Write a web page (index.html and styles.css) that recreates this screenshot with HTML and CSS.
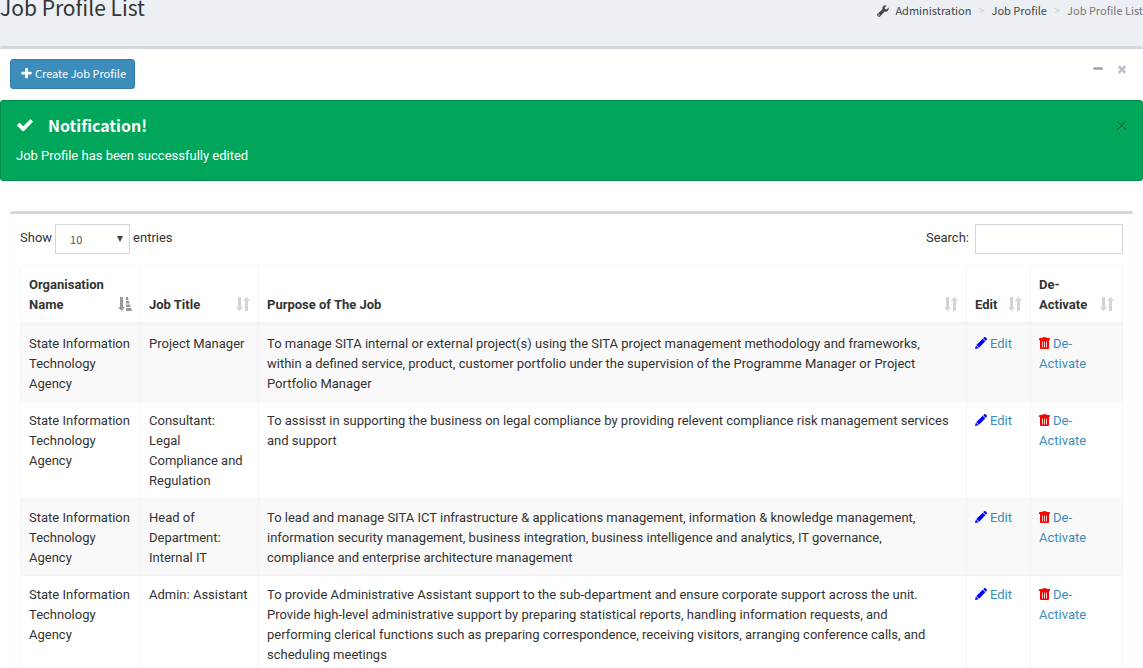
FILE: index.html
```html
<!DOCTYPE html>
<html lang="en">
<head>
<meta charset="utf-8">
<title>Job Profile List</title>
<link rel="stylesheet" href="styles.css">
</head>
<body>
<svg class="sprite" aria-hidden="true">
  <symbol id="plus" viewBox="0 0 1792 1792"><path d="M1600 736v192q0 40-28 68t-68 28h-416v416q0 40-28 68t-68 28h-192q-40 0-68-28t-28-68v-416h-416q-40 0-68-28t-28-68v-192q0-40 28-68t68-28h416v-416q0-40 28-68t68-28h192q40 0 68 28t28 68v416h416q40 0 68 28t28 68z"/></symbol>
  <symbol id="check" viewBox="0 0 1792 1792"><path d="M1671 566q0 40-28 68l-724 724-136 136q-28 28-68 28t-68-28l-136-136-362-362q-28-28-28-68t28-68l136-136q28-28 68-28t68 28l294 295 656-657q28-28 68-28t68 28l136 136q28 28 28 68z"/></symbol>
  <symbol id="minus" viewBox="0 0 1792 1792"><path d="M1600 736v192q0 40-28 68t-68 28h-1216q-40 0-68-28t-28-68v-192q0-40 28-68t68-28h1216q40 0 68 28t28 68z"/></symbol>
  <symbol id="times" viewBox="0 0 1792 1792"><path d="M1490 1322q0 40-28 68l-136 136q-28 28-68 28t-68-28l-294-294-294 294q-28 28-68 28t-68-28l-136-136q-28-28-28-68t28-68l294-294-294-294q-28-28-28-68t28-68l136-136q28-28 68-28t68 28l294 294 294-294q28-28 68-28t68 28l136 136q28 28 28 68t-28 68l-294 294 294 294q28 28 28 68z"/></symbol>
  <symbol id="wrench" viewBox="0 0 12 12"><path d="M11.6 2.4 9.6 4.400 8 4 7.600 2.400 9.600.4C8.300 0 6.900.3 6.100 1.300 5.400 2.200 5.200 3.300 5.500 4.300L.7 8.700a1.500 1.500 0 0 0 0 2.300l.3.3a1.500 1.500 0 0 0 2.300 0L7.700 6.500c1 .3 2.100.1 3-.6 1-.9 1.300-2.200.9-3.500zM2 10.700a.7.7 0 1 1 0-1.400.7.7 0 0 1 0 1.400z" fill-rule="evenodd"/></symbol>
  <symbol id="pencil" viewBox="0 0 12 12"><path d="M8.200 1.200 9.200.3a1 1 0 0 1 1.400 0l1.100 1.100a1 1 0 0 1 0 1.400l-1 1zM7.700 1.700l2.600 2.600-6.200 6.400-2.800-2.800zM.9 8.500l2.700 2.700L0 12z"/></symbol>
  <symbol id="trash" viewBox="0 0 11 12"><path d="M3.500 1V.5a.5.5 0 0 1 .5-.5h3a.5.5 0 0 1 .5.500V1H10q1 0 1 1v1H0V2q0-1 1-1zM4.300 1h2.400V.7H4.300zM1 3h9v8q0 1-1 1H2q-1 0-1-1zM3 4.500v6h.8v-6zM5.100 4.500v6h.8v-6zM7.200 4.500v6H8v-6z" fill-rule="evenodd"/></symbol>
  <symbol id="sort" viewBox="0 0 14 14"><path d="M2 0h3v10h2L3.500 14 0 10h2zM9 14h3V4h2L10.500 0 7 4h2z"/></symbol>
  <symbol id="sorted" viewBox="0 0 14 14"><path d="M2 0h3v10h2L3.500 14 0 10h2zM8 0h2l.5 3H8zM8 4h3l.5 2.500H8zM8 7.500h4l.6 2.500H8zM8 11h5.300l.7 3H8z"/></symbol>
</svg>

<header class="page-header">
  <h1 class="page-title">Job Profile List</h1>
  <nav class="breadcrumb" aria-label="Breadcrumb">
    <a class="crumb" href="#"><svg class="icon-wrench"><use href="#wrench"/></svg>Administration</a>
    <span class="crumb-sep">&gt;</span>
    <a class="crumb" href="#">Job Profile</a>
    <span class="crumb-sep">&gt;</span>
    <span class="crumb-current">Job Profile List</span>
  </nav>
</header>

<main class="box">
  <div class="box-header">
    <button class="create-button" type="button"><svg class="icon-plus"><use href="#plus"/></svg>Create Job Profile</button>
    <div class="box-tools">
      <button class="tool-button" type="button" aria-label="Collapse"><svg class="icon-tool icon-minus"><use href="#minus"/></svg></button>
      <button class="tool-button" type="button" aria-label="Remove"><svg class="icon-tool"><use href="#times"/></svg></button>
    </div>
  </div>

  <section class="alert" role="alert">
    <div class="alert-heading">
      <svg class="icon-check"><use href="#check"/></svg>
      <h2 class="alert-title">Notification!</h2>
      <button class="alert-close" type="button" aria-label="Close">×</button>
    </div>
    <p class="alert-text">Job Profile has been successfully edited</p>
  </section>

  <section class="panel">
    <div class="controls">
      <label class="control">Show
        <select class="length-select"><option>10</option><option>25</option><option>50</option></select>
        entries</label>
      <label class="control control-search">Search: <input class="search-input" type="search"></label>
    </div>
    <table class="jobs">
      <colgroup><col class="col-org"><col class="col-title"><col><col class="col-edit"><col class="col-remove"></colgroup>
      <thead>
        <tr>
          <th><div class="heading"><span>Organisation Name</span><svg class="icon-sort icon-sorted"><use href="#sorted"/></svg></div></th>
          <th><div class="heading"><span>Job Title</span><svg class="icon-sort"><use href="#sort"/></svg></div></th>
          <th><div class="heading"><span>Purpose of The Job</span><svg class="icon-sort"><use href="#sort"/></svg></div></th>
          <th><div class="heading"><span>Edit</span><svg class="icon-sort"><use href="#sort"/></svg></div></th>
          <th><div class="heading"><span>De-<wbr>Activate</span><svg class="icon-sort"><use href="#sort"/></svg></div></th>
        </tr>
      </thead>
      <tbody>
        <tr>
          <td>State Information Technology Agency</td>
          <td>Project Manager</td>
          <td>To manage SITA internal or external project(s) using the SITA project management methodology and frameworks,<br>within a defined service, product, customer portfolio under the supervision of the Programme Manager or Project<br>Portfolio Manager</td>
          <td><a class="action" href="#"><svg class="icon-pencil"><use href="#pencil"/></svg>Edit</a></td>
          <td><a class="action" href="#"><svg class="icon-trash"><use href="#trash"/></svg>De-<wbr>Activate</a></td>
        </tr>
        <tr>
          <td>State Information Technology Agency</td>
          <td>Consultant:<br>Legal<br>Compliance and Regulation</td>
          <td>To assisst in supporting the business on legal compliance by providing relevent compliance risk management services and support</td>
          <td><a class="action" href="#"><svg class="icon-pencil"><use href="#pencil"/></svg>Edit</a></td>
          <td><a class="action" href="#"><svg class="icon-trash"><use href="#trash"/></svg>De-<wbr>Activate</a></td>
        </tr>
        <tr>
          <td>State Information Technology Agency</td>
          <td>Head of Department: Internal IT</td>
          <td>To lead and manage SITA ICT infrastructure &amp; applications management, information &amp; knowledge management, information security management, business integration, business intelligence and analytics, IT governance,<br>compliance and enterprise architecture management</td>
          <td><a class="action" href="#"><svg class="icon-pencil"><use href="#pencil"/></svg>Edit</a></td>
          <td><a class="action" href="#"><svg class="icon-trash"><use href="#trash"/></svg>De-<wbr>Activate</a></td>
        </tr>
        <tr>
          <td>State Information Technology Agency</td>
          <td>Admin: Assistant</td>
          <td>To provide Administrative Assistant support to the sub-department and ensure corporate support across the unit. Provide high-level administrative support by preparing statistical reports, handling information requests, and<br>performing clerical functions such as preparing correspondence, receiving visitors, arranging conference calls, and<br>scheduling meetings</td>
          <td><a class="action" href="#"><svg class="icon-pencil"><use href="#pencil"/></svg>Edit</a></td>
          <td><a class="action" href="#"><svg class="icon-trash"><use href="#trash"/></svg>De-<wbr>Activate</a></td>
        </tr>
      </tbody>
    </table>
  </section>
</main>
</body>
</html>
```
FILE: styles.css
```css
* { box-sizing: border-box; }

html { scrollbar-width: none; }

body {
  margin: 0;
  background: #ecf0f5;
  color: #333;
  font-family: Roboto, sans-serif;
  font-size: 13px;
  line-height: 20px;
}

button, input, select { font: inherit; }
svg { fill: currentColor; }
.sprite { display: none; }

.page-title, .breadcrumb, .create-button, .alert-title, .alert-close, .length-select {
  font-family: "Noto Sans CJK SC", sans-serif;
}

.page-header {
  display: flex;
  justify-content: space-between;
  align-items: flex-start;
  height: 46px;
}

.page-title {
  margin: -9px 0 0;
  font-size: 21px;
  font-weight: 400;
  line-height: 32px;
}

.breadcrumb {
  display: flex;
  align-items: center;
  gap: 7px;
  font-size: 11px;
}

.crumb { color: #444; text-decoration: none; }
.crumb-sep { color: #ccc; }
.crumb-current { color: #777; }
.icon-wrench { width: 12px; height: 12px; margin-right: 6px; vertical-align: -2px; }

.box {
  background: #fff;
  border-top: 3px solid #d2d6de;
  border-radius: 3px;
}

.box-header {
  display: flex;
  justify-content: space-between;
  align-items: flex-start;
  padding: 10px 10px 11px;
}

.create-button {
  display: flex;
  align-items: center;
  gap: 2px;
  height: 30px;
  padding: 0 8px 2px 9px;
  border: 1px solid #367fa9;
  border-radius: 3px;
  background: #3c8dbc;
  color: #fff;
  font-size: 11px;
}

.icon-plus { width: 13px; height: 13px; }

.box-tools { display: flex; }

.tool-button {
  display: flex;
  padding: 4px 5px 4px 7px;
  border: 0;
  background: none;
  color: #bac0cd;
}

.icon-tool { width: 12px; height: 12px; }
.icon-minus { color: #97a0b3; }

.alert {
  padding: 14px 13px 14px 15px;
  border: 1px solid #008d4c;
  border-radius: 3px;
  background: #00a65a;
  color: #fff;
}

.alert-heading {
  display: flex;
  align-items: center;
  height: 20px;
}

.icon-check { width: 18px; height: 18px; margin-right: 14px; }

.alert-title {
  flex: 1;
  margin: 0;
  font-size: 16px;
  font-weight: 700;
  line-height: 20px;
}

.alert-close {
  padding: 0;
  border: 0;
  background: none;
  color: #00713d;
  font-size: 15px;
  line-height: 20px;
  text-shadow: 0 1px 0 #33b87b;
}

.alert-text { margin: 11px 0 0; line-height: 20px; }

.panel {
  margin: 30px 10px 0;
  padding: 10px 10px 20px;
  border-top: 3px solid #d2d6de;
  border-radius: 3px;
  box-shadow: 0 1px 1px rgba(0, 0, 0, 0.1);
}

.controls {
  display: flex;
  justify-content: space-between;
  margin-bottom: 11px;
}

.control { display: flex; align-items: flex-start; gap: 3px; line-height: 28px; }
.control-search { gap: 6px; }

.length-select {
  width: 75px;
  height: 30px;
  padding: 0 5px 0 14px;
  border: 1px solid #d2d6de;
  border-radius: 0;
  appearance: none;
  background: #fff url("data:image/svg+xml,%3Csvg xmlns='http://www.w3.org/2000/svg' viewBox='0 0 6 6'%3E%3Cpath d='M0 0h6L3 6z' fill='%23444'/%3E%3C/svg%3E") no-repeat right 6px center / 6px 6px;
  color: #555;
  font-size: 11px;
}

.search-input {
  width: 148px;
  height: 30px;
  padding: 5px 10px;
  border: 1px solid #d2d6de;
  border-radius: 0;
  background: #fff;
}

.jobs {
  width: 100%;
  table-layout: fixed;
  border: solid #f4f4f4;
  border-width: 1px 0 0 1px;
  border-spacing: 0;
}

.col-org { width: 120px; }
.col-title { width: 118px; }
.col-edit { width: 64px; }
.col-remove { width: 92px; }

.jobs th, .jobs td {
  padding: 9px 8px 7px;
  border: solid #f4f4f4;
  border-width: 0 1px 1px 0;
  text-align: left;
  vertical-align: top;
}

.jobs th { border-bottom-width: 3px; vertical-align: bottom; }
.jobs tbody tr:nth-child(odd) { background: #f9f9f9; }

.heading { display: flex; justify-content: space-between; align-items: flex-end; }
.heading span { min-width: 0; }

.icon-sort {
  flex: none;
  width: 14px;
  height: 14px;
  margin-bottom: 4px;
  color: #d4d4d4;
}

.icon-sorted { color: #999; }

.action { color: #3c8dbc; text-decoration: none; }
.icon-pencil { width: 12px; height: 12px; margin-right: 3px; vertical-align: -1px; color: #00f; }
.icon-trash { width: 11px; height: 12px; margin-right: 3px; vertical-align: -1px; color: #f00; }
```
